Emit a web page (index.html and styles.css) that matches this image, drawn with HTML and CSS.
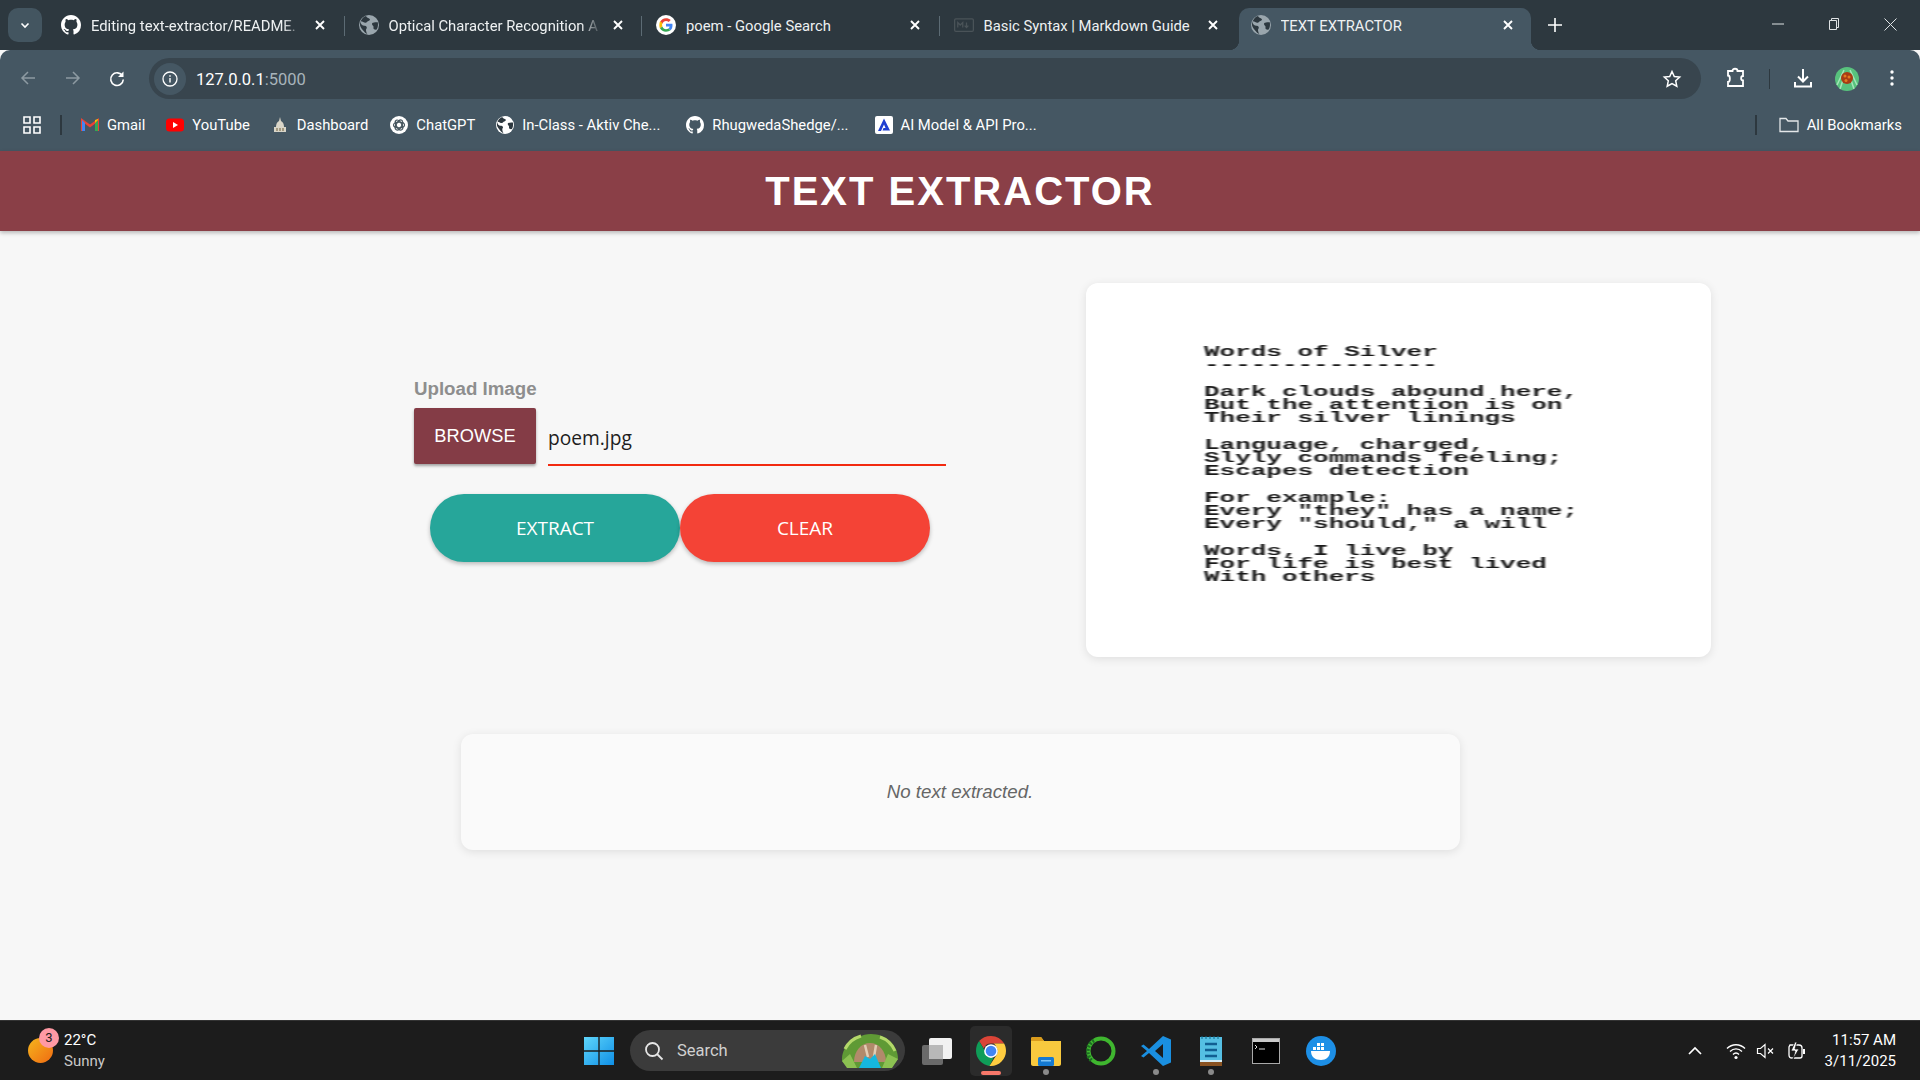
FILE: index.html
```html
<!DOCTYPE html>
<html lang="en">
<head>
  <meta charset="UTF-8" />
  <meta name="viewport" content="width=device-width, initial-scale=1.0" />
  <title>TEXT EXTRACTOR</title>
  <link rel="stylesheet" href="styles.css">
</head>
<body>
  <svg class="sprites" width="0" height="0">
    <symbol id="github" viewBox="0 0 16 16"><path fill="#fff" d="M8 0C3.58 0 0 3.58 0 8c0 3.54 2.29 6.53 5.47 7.59.4.07.55-.17.55-.38 0-.19-.01-.82-.01-1.49-2.01.37-2.53-.49-2.69-.94-.09-.23-.48-.94-.82-1.13-.28-.15-.68-.52-.01-.53.63-.01 1.08.58 1.23.82.72 1.21 1.87.87 2.33.66.07-.52.28-.87.51-1.07-1.78-.2-3.64-.89-3.64-3.95 0-.87.31-1.59.82-2.15-.08-.2-.36-1.02.08-2.12 0 0 .67-.21 2.2.82.64-.18 1.32-.27 2-.27.68 0 1.36.09 2 .27 1.53-1.04 2.2-.82 2.2-.82.44 1.1.16 1.92.08 2.12.51.56.82 1.27.82 2.15 0 3.07-1.87 3.75-3.65 3.95.29.25.54.73.54 1.48 0 1.07-.01 1.93-.01 2.2 0 .21.15.46.55.38A8.013 8.013 0 0016 8c0-4.42-3.58-8-8-8z"/></symbol>
    <symbol id="globe" viewBox="0 0 16 16"><circle cx="8" cy="8" r="8" fill="currentColor"/><path fill="#2d383f" d="M5.6.8C6 2.2 7.6 2.4 8.6 3.2c.6.6-.4 1.4-1.2 1.6-1 .3-1.2 1.2-2 1.4C4.2 6.500 3 5.200 1.400 5 1 7 2.200 8.400 4 8.600c1 .1 2 .2 2.200 1.200.2.8-.6 1.400-.6 2.200 0 .800.4 2.200 1 3.200C5.800 15.200 4 13.400 3 12 1.800 10.600.8 9 .8 8c0-3.200 2-6.200 4.800-7.200zM10.600 6.400c1-.6 2.800-.8 4.400-.6.4 2 .2 4-.8 5.800-.6.200-1.800.200-2.400-.4-.6-.8.2-1.600-.4-2.400-.4-.6-1.400-1-.8-2.400z"/></symbol>
    <symbol id="close" viewBox="0 0 12 12"><path d="M2 2l8 8M10 2l-8 8" stroke="#fff" stroke-width="1.900" fill="none"/></symbol>
    <symbol id="google" viewBox="0 0 48 48"><circle cx="24" cy="24" r="24" fill="#fff"/><path fill="#EA4335" d="M24 14.500c2.600 0 4.700.9 6.500 2.500l4.800-4.800C32.300 9.500 28.500 8 24 8c-6.300 0-11.600 3.600-14.300 8.900l5.600 4.300C16.600 17.300 20 14.500 24 14.500z"/><path fill="#4285F4" d="M39.600 24.400c0-1.100-.1-2.200-.3-3.200H24v6.300h8.800c-.4 2-1.500 3.700-3.200 4.900l5.400 4.200c3.100-2.900 4.600-7.100 4.600-12.200z"/><path fill="#FBBC05" d="M15.300 26.800c-.5-1.200-.7-2.500-.7-3.800s.2-2.600.7-3.800l-5.600-4.300C8.600 17.200 8 20.500 8 24s.6 5.800 1.700 8.100l5.600-5.300z"/><path fill="#34A853" d="M24 40c4.400 0 8-1.400 11-3.400l-5.400-4.200c-1.500 1-3.400 1.600-5.600 1.600-4 0-7.400-2.700-8.700-6.400l-5.600 4.300C12.400 37 17.700 40 24 40z"/></symbol>
  </svg>

  <div class="tabstrip">
    <button class="tab-search"><svg width="12" height="12" viewBox="0 0 12 12"><path d="M2.500 4.500L6 8l3.500-3.500" stroke="#fff" stroke-width="1.600" fill="none"/></svg></button>
    <div class="tab">
      <svg class="favicon"><use href="#github"/></svg>
      <span class="tab-title tab-title-fade">Editing text-extractor/README.</span>
      <svg class="tab-close"><use href="#close"/></svg>
    </div>
    <div class="tab">
      <svg class="favicon globe"><use href="#globe"/></svg>
      <span class="tab-title tab-title-fade">Optical Character Recognition A</span>
      <svg class="tab-close"><use href="#close"/></svg>
    </div>
    <div class="tab">
      <svg class="favicon"><use href="#google"/></svg>
      <span class="tab-title">poem - Google Search</span>
      <svg class="tab-close"><use href="#close"/></svg>
    </div>
    <div class="tab tab-last">
      <svg class="favicon" viewBox="0 0 16 16"><rect x=".5" y="3" width="15" height="10" rx="1" fill="none" stroke="#4a5358"/><path d="M3 10V6l2 2 2-2v4M10 6v4m-1.500-1.500L10 10l1.500-1.500" stroke="#4a5358" fill="none"/></svg>
      <span class="tab-title">Basic Syntax | Markdown Guide</span>
      <svg class="tab-close"><use href="#close"/></svg>
    </div>
    <div class="tab tab-active">
      <svg class="favicon globe"><use href="#globe"/></svg>
      <span class="tab-title">TEXT EXTRACTOR</span>
      <svg class="tab-close"><use href="#close"/></svg>
    </div>
    <svg class="new-tab" width="14" height="14" viewBox="0 0 14 14"><path d="M7 0v14M0 7h14" stroke="#fff" stroke-width="1.600"/></svg>
    <div class="window-btns">
      <svg width="12" height="12" viewBox="0 0 12 12"><path d="M0 6h12" stroke="#dfe3e5"/></svg>
      <svg width="12" height="14" viewBox="0 0 12 14"><path d="M1.500 3.500h7v9h-7zM3.500 3.500v-2h7v9h-2" stroke="#dfe3e5" fill="none"/></svg>
      <svg width="13" height="13" viewBox="0 0 13 13"><path d="M.5.500l12 12M12.500.500l-12 12" stroke="#dfe3e5"/></svg>
    </div>
  </div>

  <div class="toolbar">
    <svg class="nav-icon" width="16" height="16" viewBox="0 0 16 16"><path d="M15 8H2M8 2L2 8l6 6" stroke="#8d9aa2" stroke-width="1.500" fill="none"/></svg>
    <svg class="nav-icon" width="16" height="16" viewBox="0 0 16 16"><path d="M1 8h13M8 2l6 6-6 6" stroke="#8d9aa2" stroke-width="1.500" fill="none"/></svg>
    <svg class="nav-icon" width="18" height="18" viewBox="0 0 18 18"><path d="M14.500 6A6.300 6.300 0 1 0 15.300 9.500" stroke="#fff" stroke-width="1.600" fill="none"/><path d="M15.500 1.500V7H10z" fill="#fff"/></svg>
    <div class="omnibox">
      <span class="site-info"><svg width="16" height="16" viewBox="0 0 16 16"><circle cx="8" cy="8" r="7" stroke="#fff" stroke-width="1.300" fill="none"/><path d="M8 7v4.500M8 4.200v1.500" stroke="#fff" stroke-width="1.400"/></svg></span>
      <span class="url">127.0.0.1<span class="url-port">:5000</span></span>
      <svg class="star" width="20" height="20" viewBox="0 0 20 20"><path d="M10 2.500l2.300 5 5.400.6-4 3.700 1.100 5.400-4.800-2.700-4.800 2.700 1.100-5.400-4-3.700 5.400-.6z" stroke="#fff" stroke-width="1.500" fill="none"/></svg>
    </div>
    <svg class="tool-icon" width="20" height="22" viewBox="0 0 20 22"><path d="M2 4h4.500c0-3 5-3 5 0H17v5c-2.500 0-2.500 4.500 0 4.500V19H2v-4c2.500 0 2.500-6.500 0-6.500z" stroke="#fff" stroke-width="1.800" fill="none"/></svg>
    <span class="tool-sep"></span>
    <svg class="tool-icon" width="20" height="22" viewBox="0 0 20 22"><path d="M10 2v12M5 9.500l5 5 5-5" stroke="#fff" stroke-width="2" fill="none"/><path d="M2 15v4.500h16V15" stroke="#fff" stroke-width="2" fill="none"/></svg>
    <svg class="avatar" width="24" height="24" viewBox="0 0 24 24"><circle cx="12" cy="12" r="12" fill="#58c27d"/><path d="M2 18L9 3M22 18L15 3M5 22l3-9M19 22l-3-9" stroke="#a5e6b8" stroke-width="1.500"/><circle cx="12" cy="11" r="6" fill="#a83c14"/><circle cx="10" cy="9" r="1.500" fill="#e2791f"/><circle cx="14" cy="10" r="1.500" fill="#e2791f"/><circle cx="11" cy="13.500" r="1.500" fill="#e2791f"/></svg>
    <svg class="menu-icon" width="4" height="18" viewBox="0 0 4 18"><circle cx="2" cy="3" r="1.700" fill="#fff"/><circle cx="2" cy="9" r="1.700" fill="#fff"/><circle cx="2" cy="15" r="1.700" fill="#fff"/></svg>
  </div>

  <div class="bookmarks">
    <svg class="apps" width="18" height="18" viewBox="0 0 18 18"><path d="M1 1h6v6H1zM11 1h6v6h-6zM1 11h6v6H1zM11 11h6v6h-6z" stroke="#fff" stroke-width="1.600" fill="none"/></svg>
    <span class="bm-sep"></span>
    <span class="bookmark bm-gmail">
      <svg width="18" height="16" viewBox="0 0 18 16"><path d="M1 14V3l8 6 8-6v11" fill="none" stroke="#ea4335" stroke-width="2.200"/><path d="M1 3v11h3V6z" fill="#4285f4"/><path d="M17 3v11h-3V6z" fill="#34a853"/><path d="M14 6l3-3V2l-3 1z" fill="#fbbc05"/></svg>
      Gmail
    </span>
    <span class="bookmark bm-youtube">
      <svg width="18" height="16" viewBox="0 0 18 16"><rect y="1.500" width="18" height="13" rx="3.500" fill="#f00"/><path d="M7 5l5 3-5 3z" fill="#fff"/></svg>
      YouTube
    </span>
    <span class="bookmark bm-dash">
      <svg width="18" height="18" viewBox="0 0 18 18"><path d="M9 1l1 4c2 1 3 3 3 6h2v5H3v-5h2c0-3 1-5 3-6z" fill="#d9d5c8"/><path d="M6 12v3M9 12v3M12 12v3" stroke="#6d5c36"/></svg>
      Dashboard
    </span>
    <span class="bookmark bm-chat">
      <svg width="18" height="18" viewBox="0 0 18 18"><circle cx="9" cy="9" r="9" fill="#fff"/><g fill="none" stroke="#46565f" stroke-width="1.200"><ellipse cx="9" cy="9" rx="5.500" ry="2.800"/><ellipse cx="9" cy="9" rx="5.500" ry="2.800" transform="rotate(60 9 9)"/><ellipse cx="9" cy="9" rx="5.500" ry="2.800" transform="rotate(120 9 9)"/></g></svg>
      ChatGPT
    </span>
    <span class="bookmark bm-class">
      <svg class="favicon-white" width="18" height="18"><use href="#globe"/></svg>
      In-Class - Aktiv Che...
    </span>
    <span class="bookmark bm-rhug">
      <svg width="18" height="18"><use href="#github"/></svg>
      RhugwedaShedge/...
    </span>
    <span class="bookmark bm-ai">
      <svg width="18" height="18" viewBox="0 0 18 18"><rect width="18" height="18" rx="2" fill="#fff"/><path d="M9 2.500L3 15h3l3-6.500 1.500 3.500H8.500l-1 2.500H15z" fill="#1f3fd1"/></svg>
      AI Model &amp; API Pro...
    </span>
    <span class="bm-sep bm-sep-right"></span>
    <span class="bookmark bm-all">
      <svg width="20" height="16" viewBox="0 0 20 16"><path d="M1 14.500v-13h6l2 2.500h10v10.500z" stroke="#e4e7e9" stroke-width="1.300" fill="none"/></svg>
      All Bookmarks
    </span>
  </div>

  <header class="page-header">TEXT EXTRACTOR</header>

  <main class="page">
    <section class="workspace">
      <form class="upload">
        <div class="upload-label">Upload Image</div>
        <div class="file-row">
          <span class="browse-btn">BROWSE</span>
          <span class="file-name">poem.jpg</span>
        </div>
        <div class="actions">
          <button type="button" class="pill pill-extract">EXTRACT</button>
          <button type="button" class="pill pill-clear">CLEAR</button>
        </div>
      </form>
      <div class="preview-card">
        <pre class="poem">Words of Silver
---------------

Dark clouds abound here,
But the attention is on
Their silver linings

Language, charged,
Slyly commands feeling;
Escapes detection

For example:
Every "they" has a name;
Every "should," a will

Words, I live by
For life is best lived
With others</pre>
      </div>
    </section>
    <section class="result-card">No text extracted.</section>
  </main>

  <footer class="taskbar">
    <div class="weather">
      <span class="sun"><span class="badge">3</span></span>
      <div class="weather-text"><div>22°C</div><div class="weather-sub">Sunny</div></div>
    </div>
    <div class="task-center">
      <svg class="task-icon" width="30" height="30" viewBox="0 0 30 30"><defs><linearGradient id="win" x1="0" y1="0" x2="1" y2="1"><stop offset="0" stop-color="#5fd6fb"/><stop offset="1" stop-color="#0f8fe6"/></linearGradient></defs><path d="M0 1h14.300v13.300H0zM15.700 1H30v13.300H15.700zM0 15.700h14.300V29H0zM15.700 15.700H30V29H15.700z" fill="url(#win)"/></svg>
      <div class="search-box">
        <svg width="20" height="20" viewBox="0 0 20 20"><circle cx="8.500" cy="8.500" r="6.500" stroke="#e6e6e6" stroke-width="1.800" fill="none"/><path d="M13 13l5.500 5.500" stroke="#e6e6e6" stroke-width="1.800"/></svg>
        <span>Search</span>
        <svg class="search-art" width="58" height="36" viewBox="0 0 58 36"><path d="M1 28C0 14 12 2 30 1c15 0 27 11 27 25l-7 9H8z" fill="#5f9a35"/><path d="M4 16c3-6 9-11 16-13M54 18c-3-7-9-12-15-14" stroke="#b4d86a" stroke-width="3" fill="none"/><path d="M13 29c0-11 7-19 16-19s16 8 16 19z" fill="#b18a6b"/><path d="M24 12l3 12M35 12l-2 12" stroke="#e2cdb4" stroke-width="2.500"/><path d="M18 35l6-12 5 3 5-5 6 14z" fill="#16b7de"/><path d="M1 28l8-7 7 14H6zM57 26l-10-5-6 14h10z" fill="#8cc152"/></svg>
      </div>
      <svg class="task-icon" width="32" height="30" viewBox="0 0 32 30"><rect x="1" y="9" width="21" height="20" rx="2" fill="#6a6a6a"/><rect x="8" y="2" width="23" height="21" rx="2" fill="#f1f1f1"/><rect x="8" y="9" width="14" height="14" fill="#b8b8b8"/></svg>
      <span class="task-app task-chrome">
        <svg width="30" height="30" viewBox="0 0 48 48"><path fill="#db4437" d="M24 0c9 0 17 5 21 12H24c-6 0-10 3-11.500 8L5 8C9.500 3 16 0 24 0z"/><path fill="#0f9d58" d="M5 8l10.500 18c2 5 7 9 12.500 9l-6.500 12.900C10 46.500 0 36 0 24 0 17 2 12 5 8z"/><path fill="#ffcd40" d="M45 12c2 3.500 3 7.500 3 12 0 13-11 24-24 24h-2.500L33 30c2-3 2-6 1-9-1-3.500-3-7-6-9z"/><circle cx="24" cy="24" r="11" fill="#fff"/><circle cx="24" cy="24" r="8.500" fill="#4285f4"/></svg>
        <i class="running-bar"></i>
      </span>
      <span class="task-app">
        <svg width="30" height="30" viewBox="0 0 30 30"><path d="M0 3c0-1.500 1-2 2-2h8l3 4h17v23c0 1-1 2-2 2H2c-1 0-2-1-2-2z" fill="#f8c93e"/><path d="M0 3c0-1.500 1-2 2-2h8l3 4H0z" fill="#d99b1c"/><rect x="7" y="21" width="16" height="9" rx="1.500" fill="#1479d1"/><rect x="10" y="24" width="10" height="1.500" fill="#7cc3f5"/></svg>
        <i class="running-dot"></i>
      </span>
      <span class="task-app">
        <svg width="30" height="30" viewBox="0 0 30 30"><circle cx="15" cy="15" r="12.500" stroke="#3fb62f" stroke-width="4" fill="none"/><path d="M8 4.500a12.500 12.500 0 0 0-2.500 20" stroke="#1d6e22" stroke-width="4" stroke-dasharray="2 1.500" fill="none"/></svg>
      </span>
      <span class="task-app">
        <svg width="30" height="30" viewBox="0 0 30 30"><path d="M22 0l8 3.500v23L22 30 8 17l-5.500 4.500L0 20l6-5-6-5 2.500-1.500L8 13zM22 8l-8 7 8 7z" fill="#1a8fe0"/></svg>
        <i class="running-dot"></i>
      </span>
      <span class="task-app">
        <svg width="26" height="30" viewBox="0 0 26 30"><rect x="2" y="1" width="22" height="27" fill="#55bfe3"/><rect x="2" y="26" width="22" height="4" fill="#8a5322"/><rect x="2" y="24" width="22" height="2" fill="#d8eef6"/><path d="M7 8h12M7 14h12M7 20h12" stroke="#125f92" stroke-width="2.500"/><path d="M4 0v3M8 0v3M12 0v3M16 0v3M20 0v3" stroke="#0c6b8e"/></svg>
        <i class="running-dot"></i>
      </span>
      <span class="task-app">
        <svg width="28" height="26" viewBox="0 0 28 26"><rect x=".5" y=".5" width="27" height="25" fill="#000" stroke="#a9a9a9"/><rect x="1" y="1" width="26" height="3" fill="#c9c9c9"/><path d="M3 7l2 2-2 2M7 11h6" stroke="#ddd" fill="none"/></svg>
      </span>
      <span class="task-app">
        <svg width="30" height="30" viewBox="0 0 30 30"><circle cx="15" cy="15" r="15" fill="#1d8fe6"/><path d="M5 15h19c0 6-4 9-9 9-6 0-10-3-10-9z" fill="#fff"/><path d="M7 11h3v3H7zM11 11h3v3h-3zM15 11h3v3h-3zM11 7h3v3h-3zM15 7h3v3h-3z" fill="#fff"/></svg>
      </span>
    </div>
    <div class="tray">
      <svg class="tray-chevron" width="14" height="9" viewBox="0 0 14 9"><path d="M1 8l6-6 6 6" stroke="#fff" stroke-width="1.700" fill="none"/></svg>
      <svg width="20" height="18" viewBox="0 0 20 18"><path d="M1 6.500c5-5 13-5 18 0M4 9.500c3.500-3.500 8.500-3.500 12 0M7 12.500c2-2 4-2 6 0" stroke="#fff" stroke-width="1.400" fill="none"/><circle cx="10" cy="15.500" r="1.600" fill="#fff"/></svg>
      <svg width="20" height="18" viewBox="0 0 20 18"><path d="M1.500 6.500h3L9 2.500v13l-4.500-4h-3z" stroke="#fff" stroke-width="1.200" fill="none"/><path d="M12 6.500l5 5M17 6.500l-5 5" stroke="#fff" stroke-width="1.200"/></svg>
      <svg width="20" height="20" viewBox="0 0 20 20"><path d="M4 4h9c2 0 3 1 3 3v8c0 1-1 2-2 2H6c-2 0-3-1-3-3V6z" stroke="#fff" stroke-width="1.300" fill="none"/><path d="M9 1L5 10h4l-2 8 6-10H9l2-7z" fill="#fff" stroke="#1c1c1c" stroke-width=".8"/><rect x="17" y="8" width="2" height="5" fill="#fff"/></svg>
      <div class="clock"><div>11:57 AM</div><div>3/11/2025</div></div>
    </div>
  </footer>
</body>
</html>
```

FILE: styles.css
```css
* {
  box-sizing: border-box;
}

html, body {
  margin: 0;
  height: 100%;
}

body {
  width: 1920px;
  height: 1080px;
  overflow: hidden;
  display: flex;
  flex-direction: column;
  font-family: "Liberation Sans", Arial, sans-serif;
  background: #f7f7f7;
}

.sprites {
  position: absolute;
}

/* browser chrome */
.tabstrip {
  height: 50px;
  display: flex;
  align-items: flex-start;
  background: #2d383f;
  font-family: Roboto, "Noto Sans", sans-serif;
  font-size: 14.8px;
  color: #fff;
}

.tab-search {
  width: 34px;
  height: 34px;
  margin: 8px 4px 0 8px;
  padding: 0;
  border: none;
  border-radius: 10px;
  background: #435560;
  display: flex;
  align-items: center;
  justify-content: center;
}

.tab {
  position: relative;
  width: 297.5px;
  height: 42px;
  margin-top: 8px;
  margin-bottom: -2px;
  padding: 4px 17.5px 0 15px;
  display: flex;
  align-items: flex-start;
  flex-shrink: 0;
}

.tab:not(:first-of-type):not(.tab-active)::before {
  content: "";
  position: absolute;
  left: 0;
  top: 8px;
  height: 20px;
  width: 1px;
  background: #5c6b74;
}

.tab-active {
  width: 292px;
  margin-left: 3px;
  padding-left: 11.5px;
  background: #455763;
  border-radius: 10px 10px 0 0;
}

.tab-active::before, .tab-active::after {
  content: "";
  position: absolute;
  bottom: 0;
  width: 10px;
  height: 10px;
}

.tab-active::before {
  left: -10px;
  background: radial-gradient(circle at 0 0, transparent 10px, #455763 10.5px);
}

.tab-active::after {
  right: -10px;
  background: radial-gradient(circle at 100% 0, transparent 10px, #455763 10.5px);
}

.favicon {
  width: 20px;
  height: 20px;
  margin-top: 3px;
  flex-shrink: 0;
}

.globe {
  color: #9aa6ad;
}

.tab-title {
  flex: 1;
  margin: 1px 0 0 10px;
  line-height: 26px;
  white-space: nowrap;
  overflow: hidden;
  color: #eef1f2;
}

.tab-title-fade {
  -webkit-mask-image: linear-gradient(to right, #000 90%, transparent 100%);
  mask-image: linear-gradient(to right, #000 90%, transparent 100%);
}

.tab-close {
  width: 12px;
  height: 12px;
  margin: 7px 0 0 10px;
  flex-shrink: 0;
}

.new-tab {
  margin: 18px 0 0 17px;
}

.window-btns {
  margin-left: auto;
  margin-top: -1px;
  height: 50px;
  padding-right: 23px;
  display: flex;
  gap: 44px;
  align-items: center;
}

.toolbar {
  height: 53px;
  padding-top: 8px;
  display: flex;
  align-items: flex-start;
  background: #455763;
  border-radius: 10px 10px 0 0;
}

.nav-icon {
  margin: 12px 0 0 20px;
}

.nav-icon + .nav-icon {
  margin-left: 29px;
}

.nav-icon + .nav-icon + .nav-icon {
  margin-left: 27px;
}

.omnibox {
  width: 1552px;
  height: 41px;
  margin-left: 23px;
  padding: 0 7px 0 5px;
  display: flex;
  align-items: center;
  border-radius: 21px;
  background: #38454e;
  font-family: Roboto, "Noto Sans", sans-serif;
  font-size: 16.5px;
  color: #fff;
}

.site-info {
  width: 32px;
  height: 32px;
  border-radius: 50%;
  background: #455763;
  display: flex;
  align-items: center;
  justify-content: center;
}

.url {
  margin-left: 10px;
  padding-top: 2px;
}

.url-port {
  color: #a8b4bb;
}

.star {
  margin-left: auto;
  margin-right: 12px;
}

.tool-icon {
  margin: 9px 0 0 25px;
}

.tool-icon + .tool-sep + .tool-icon {
  margin-left: 23px;
}

.tool-sep {
  width: 1px;
  height: 20px;
  margin: 11px 0 0 23px;
  background: #2d383f;
}

.avatar {
  margin: 9px 0 0 22px;
}

.menu-icon {
  margin: 11px 0 0 31px;
}

.bookmarks {
  height: 48px;
  padding: 0 0 4px 23px;
  display: flex;
  align-items: center;
  background: #455763;
  font-family: Roboto, "Noto Sans", sans-serif;
  font-size: 14.8px;
  color: #fff;
}

.bm-sep {
  width: 2px;
  height: 20px;
  margin-left: 19px;
  background: #2d383f;
}

.bookmark {
  display: flex;
  align-items: center;
  gap: 8px;
  white-space: nowrap;
  margin-left: 21px;
}

.bm-gmail {
  margin-left: 19px;
}

.bm-chat {
  margin-left: 22px;
}

.bm-rhug, .bm-ai {
  margin-left: 26px;
}

.favicon-white {
  color: #fff;
}

.bm-sep-right {
  margin-left: auto;
}

.bm-all {
  margin-right: 18px;
  margin-left: 22px;
}

/* the page itself */
.page-header {
  position: relative;
  height: 80px;
  display: flex;
  align-items: center;
  justify-content: center;
  background: #8a3f47;
  color: #fff;
  font-size: 40px;
  font-weight: bold;
  letter-spacing: 2px;
  box-shadow: 0 2px 4px rgba(0,0,0,0.25);
}

.page {
  flex: 1;
  padding-top: 52px;
}

.workspace {
  display: flex;
  align-items: center;
  padding-left: 414px;
}

.upload {
  width: 532px;
  margin-right: 140px;
  padding-bottom: 2px;
}

.upload-label {
  font-size: 18.7px;
  font-weight: bold;
  color: #8e8e8e;
  line-height: 26px;
  margin-bottom: 6px;
}

.file-row {
  display: flex;
  align-items: flex-start;
}

.browse-btn {
  width: 122px;
  height: 56px;
  display: flex;
  align-items: center;
  justify-content: center;
  background: #843c46;
  color: #fff;
  font-size: 18.3px;
  border-radius: 2px;
  box-shadow: 0 2px 3px rgba(0,0,0,0.35);
}

.file-name {
  width: 398px;
  height: 58px;
  margin-left: 12px;
  padding-top: 16px;
  border-bottom: 2px solid #f22a10;
  font-family: "Open Sans", "Noto Sans", sans-serif;
  font-size: 19.2px;
  line-height: 28px;
  color: #1d1d1d;
}

.actions {
  display: flex;
  margin: 28px 0 0 16px;
}

.pill {
  width: 250px;
  height: 68px;
  border: none;
  border-radius: 34px;
  font-family: "Open Sans", "Noto Sans", sans-serif;
  font-size: 19px;
  color: #fff;
  box-shadow: 0 2px 4px rgba(0,0,0,0.25);
}

.pill-extract {
  background: #26a69a;
}

.pill-clear {
  background: #f44336;
}

.preview-card {
  width: 625px;
  height: 374px;
  padding: 63px 0 0 118px;
  background: #fff;
  border-radius: 12px;
  box-shadow: 0 2px 10px rgba(0,0,0,0.1);
  overflow: hidden;
}

.poem {
  margin: 0;
  font-family: "Liberation Mono", monospace;
  font-size: 14px;
  font-weight: bold;
  line-height: 13.25px;
  color: #1a1a1a;
  transform: scaleX(1.855);
  transform-origin: 0 0;
  filter: blur(0.5px);
}

.result-card {
  width: 999px;
  height: 116px;
  margin: 77px auto 0;
  display: flex;
  align-items: center;
  justify-content: center;
  background: #fafafa;
  border-radius: 12px;
  box-shadow: 0 2px 10px rgba(0,0,0,0.1);
  font-size: 18.7px;
  font-style: italic;
  color: #666;
}

/* windows taskbar */
.taskbar {
  height: 60px;
  display: grid;
  grid-template-columns: 1fr auto 1fr;
  align-items: center;
  background: #1c1c1c;
  border-top: 1px solid #333;
  font-family: Roboto, "Noto Sans", sans-serif;
  color: #fff;
  font-size: 15px;
}

.weather {
  display: flex;
  align-items: center;
  padding-left: 28px;
}

.sun {
  position: relative;
  width: 25px;
  height: 25px;
  border-radius: 50%;
  background: linear-gradient(135deg, #f5b61d, #f06b12);
}

.badge {
  position: absolute;
  top: -10px;
  left: 11px;
  width: 20px;
  height: 20px;
  border-radius: 50%;
  background: #ff99a4;
  color: #1c1c1c;
  font-size: 13px;
  line-height: 20px;
  text-align: center;
}

.weather-text {
  margin-left: 11px;
  line-height: 21px;
}

.weather-sub {
  color: #c9c9c9;
}

.task-center {
  margin-left: 12px;
  display: flex;
  align-items: center;
}

.task-icon {
  flex-shrink: 0;
}

.search-box {
  width: 275px;
  height: 41px;
  margin: 0 16px;
  padding: 0 0 0 14px;
  display: flex;
  align-items: center;
  gap: 13px;
  border-radius: 21px;
  background: #3b3b3b;
  font-size: 16.5px;
  color: #d0d0d0;
}

.search-art {
  margin-left: auto;
  margin-right: 6px;
}

.task-app {
  position: relative;
  width: 55px;
  height: 50px;
  display: flex;
  align-items: center;
  justify-content: center;
}

.task-chrome {
  width: 42px;
  margin: 0 6px 0 17px;
  background: #2b2b2b;
  border-radius: 5px;
}

.running-bar {
  position: absolute;
  bottom: 1px;
  left: 50%;
  width: 20px;
  height: 4px;
  margin-left: -10px;
  border-radius: 2px;
  background: #f8786a;
}

.running-dot {
  position: absolute;
  bottom: 1px;
  left: 50%;
  width: 6px;
  height: 6px;
  margin-left: -3px;
  border-radius: 50%;
  background: #8a8a8a;
}

.tray {
  display: flex;
  align-items: center;
  justify-content: flex-end;
  gap: 10px;
  padding-right: 24px;
}

.tray-chevron {
  margin-right: 14px;
}

.clock {
  width: 80px;
  text-align: right;
  line-height: 21px;
}
```
